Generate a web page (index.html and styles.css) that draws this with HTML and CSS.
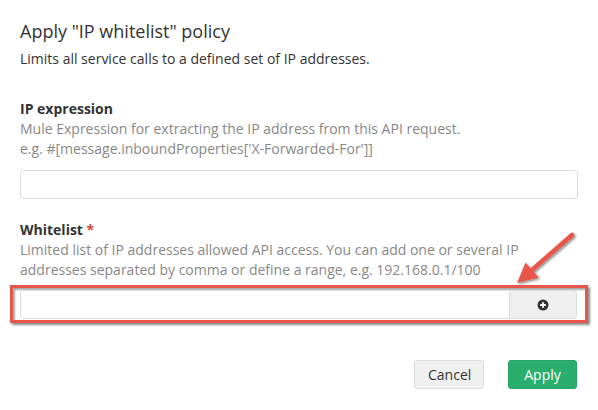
FILE: index.html
```html
<!DOCTYPE html>
<html>
<head>
<meta charset="utf-8">
<link rel="stylesheet" href="styles.css">
</head>
<body>
<div class="modal">
  <div class="modal-header">
    <h1 class="title">Apply "IP whitelist" policy</h1>
    <p class="subtitle">Limits all service calls to a defined set of IP addresses.</p>
  </div>
  <div class="modal-body">
    <div class="field">
      <div class="label">IP expression</div>
      <div class="help">Mule Expression for extracting the IP address from this API request.<br>e.g. #[message.inboundProperties['X-Forwarded-For']]</div>
      <div class="input"></div>
    </div>
    <div class="field">
      <div class="label">Whitelist <span class="req">*</span></div>
      <div class="help">Limited list of IP addresses allowed API access. You can add one or several IP addresses separated by comma or define a range, e.g. 192.168.0.1/100</div>
      <div class="highlight">
        <div class="input-group">
          <div class="input grow"></div>
          <div class="addon">
            <svg width="12" height="12" viewBox="0 0 12 12"><circle cx="6" cy="6" r="5.5" fill="#333"/><path d="M6 3.2v5.6M3.2 6h5.6" stroke="#fff" stroke-width="1.8"/></svg>
          </div>
        </div>
      </div>
    </div>
  </div>
  <div class="modal-footer">
    <button class="btn btn-default">Cancel</button>
    <button class="btn btn-primary">Apply</button>
  </div>
  <svg class="arrow" width="80" height="70" viewBox="0 0 80 70">
    <defs>
      <filter id="sh" x="-20%" y="-20%" width="140%" height="140%">
        <feDropShadow dx="1.5" dy="1.5" stdDeviation="1" flood-color="#000" flood-opacity="0.45"/>
      </filter>
    </defs>
    <g filter="url(#sh)">
      <path d="M62 7 L20 43.6" stroke="#e9574a" stroke-width="4.5" stroke-linecap="round"/>
      <path d="M7 55 L15.5 34.4 L28.7 49.4 Z" fill="#e9574a"/>
    </g>
  </svg>
</div>
</body>
</html>
```
FILE: styles.css
```css
html, body {
  margin: 0;
  padding: 0;
  background: #fff;
}
body {
  font-family: "Open Sans", "DejaVu Sans", sans-serif;
  color: #333;
  width: 598px;
  height: 410px;
  overflow: hidden;
}
.modal {
  position: relative;
  box-sizing: border-box;
  width: 604px;
  height: 416px;
  margin: -3px;
  border: 1px solid rgba(0,0,0,0.35);
  border-radius: 6px;
  background: #fff;
  padding: 0 22px;
}
.modal-header {
  padding-top: 21px;
}
.title {
  margin: 0;
  font-size: 18px;
  font-weight: 400;
  line-height: 24px;
  color: #333;
}
.subtitle {
  margin: 6px 0 0;
  font-size: 14px;
  line-height: 20px;
  color: #333;
}
.modal-body {
  padding-top: 30px;
}
.field {
  margin-bottom: 21px;
}
.label {
  font-size: 14px;
  font-weight: 700;
  line-height: 20px;
  color: #333;
}
.req {
  color: #d9443a;
}
.help {
  font-size: 14px;
  line-height: 20px;
  color: #888;
  margin-bottom: 11px;
}
.input {
  box-sizing: border-box;
  height: 29px;
  border: 1px solid #ddd;
  border-radius: 4px;
  background: #fff;
}
.highlight {
  margin: -6px -10px 0 -10px;
  padding: 2px 8px 1px 7px;
  border: 3px solid #e9574a;
  box-shadow: 2px 2px 2px rgba(0,0,0,0.45), inset 2px 2px 2px rgba(0,0,0,0.35);
}
.input-group {
  display: flex;
  height: 29px;
}
.input.grow {
  flex: 1;
  border-radius: 4px 0 0 4px;
}
.addon {
  width: 67px;
  box-sizing: border-box;
  border: 1px solid #ddd;
  border-left: none;
  border-radius: 0 4px 4px 0;
  background: #efefef;
  display: flex;
  align-items: center;
  justify-content: center;
}
.addon svg { display: block; }
.modal-footer {
  position: absolute;
  right: 23px;
  top: 362px;
  display: flex;
  gap: 24px;
}
.btn {
  font-family: "Open Sans", "DejaVu Sans", sans-serif;
  font-size: 14px;
  height: 29px;
  padding: 0 13px;
  border-radius: 3px;
  cursor: pointer;
}
.btn-default {
  background: #f0f0f0;
  border: 1px solid #ddd;
  color: #333;
  width: 70px;
}
.btn-primary {
  background: #2aae6e;
  border: 1px solid #27a366;
  color: #fff;
  width: 69px;
}
.arrow {
  position: absolute;
  left: 512px;
  top: 230px;
}
```
